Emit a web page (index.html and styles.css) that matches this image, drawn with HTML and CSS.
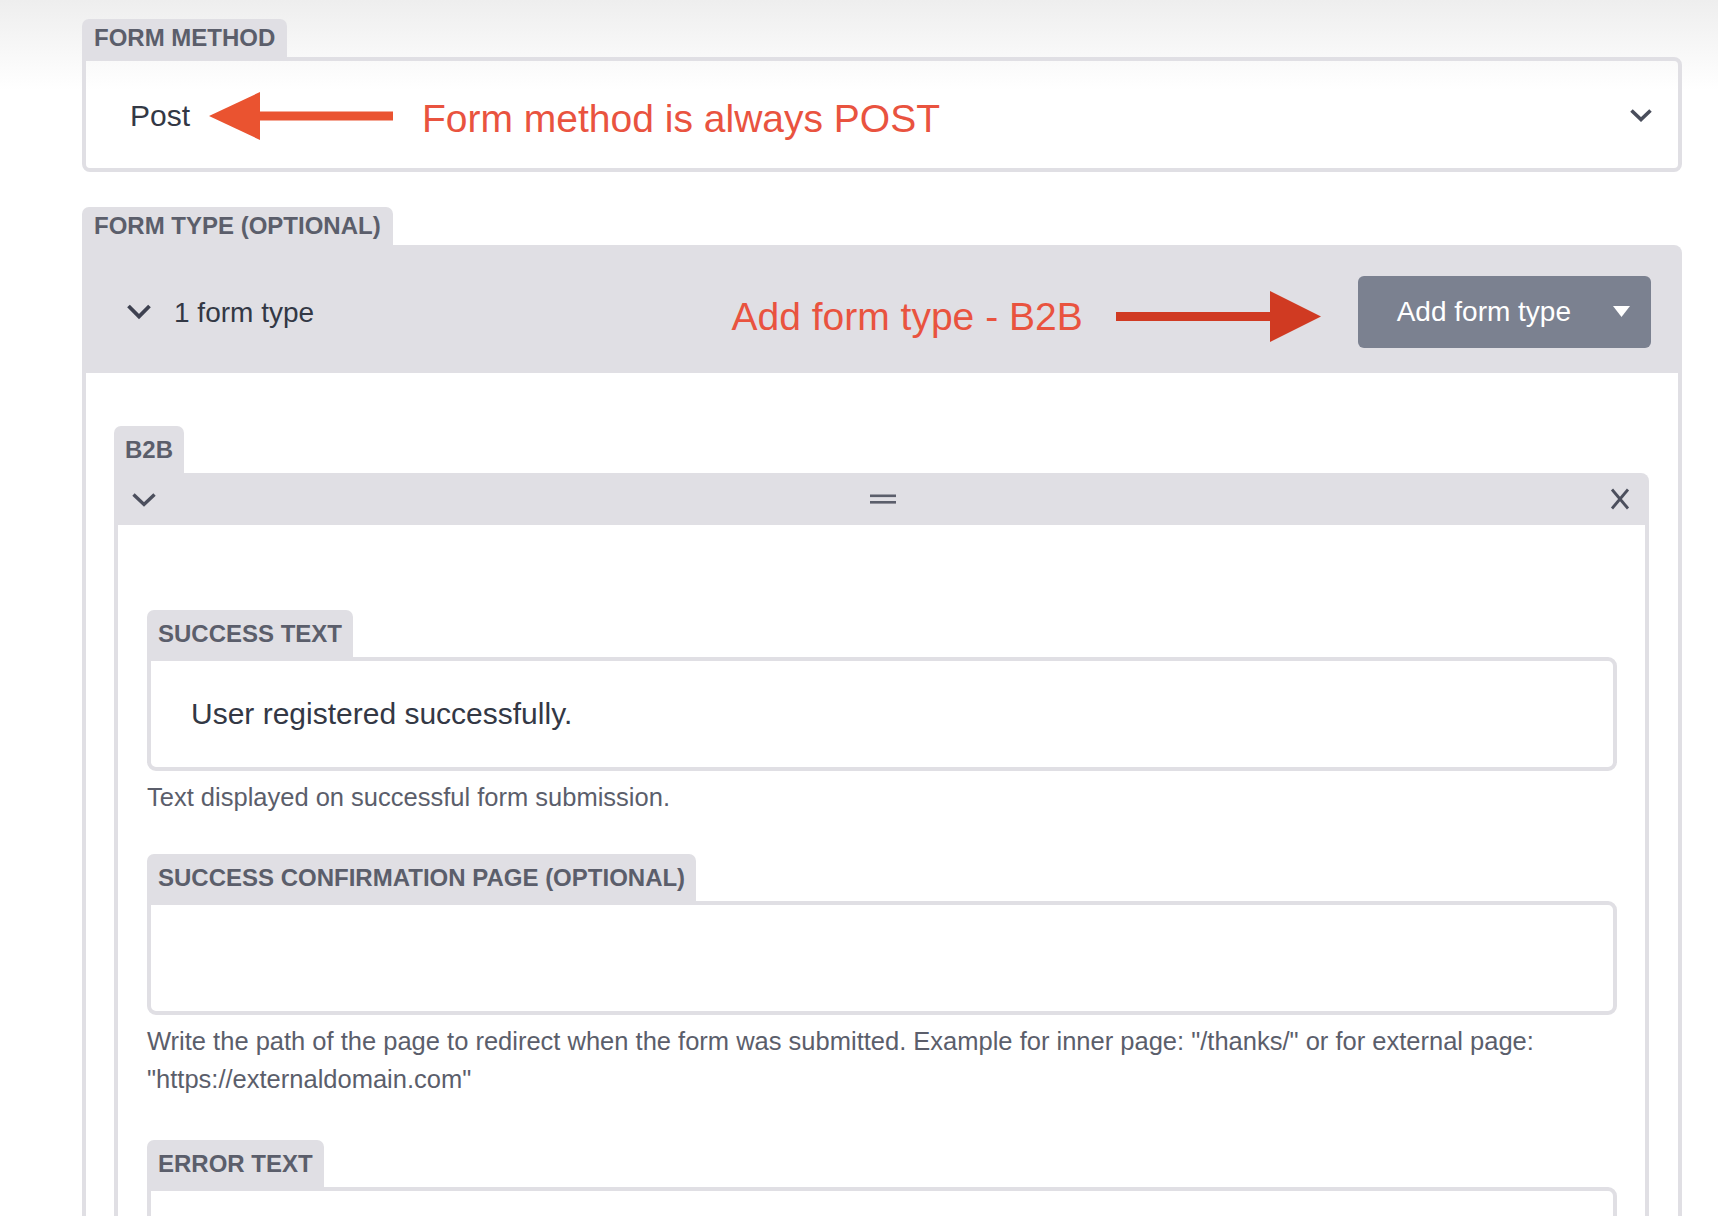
FILE: index.html
```html
<!DOCTYPE html>
<html lang="en">
<head>
	<meta charset="UTF-8">
	<title>Form settings</title>

	<link rel="stylesheet" href="styles.css">
</head>
<body>
<div class="page">

	<div class="field">
		<div class="tab">Form method</div>
		<div class="select">
			<span class="select-value">Post</span>
			<svg class="arrow-left" viewBox="0 0 184 48" width="184" height="48">
				<polygon points="0,24 51,0 51,48" fill="#ea5330"/>
				<rect x="50" y="19.5" width="134" height="9" fill="#ea5330"/>
			</svg>
			<span class="note">Form method is always POST</span>
			<svg class="select-chevron" viewBox="0 0 24 15" width="24" height="15">
				<polyline points="2.5,2.5 12,11.5 21.5,2.5" fill="none" stroke="#4a4e5c" stroke-width="3.6"/>
			</svg>
		</div>
	</div>

	<div class="field types">
		<div class="tab">Form type (optional)</div>
		<div class="panel-head">
			<svg class="head-chevron" viewBox="0 0 26 17" width="26" height="17">
				<polyline points="2.5,3 13,13.5 23.5,3" fill="none" stroke="#3e4150" stroke-width="3.8"/>
			</svg>
			<span class="count">1 form type</span>
			<span class="note note-right">Add form type - B2B</span>
			<svg class="arrow-right" viewBox="0 0 205 51" width="205" height="51">
				<rect x="0" y="21" width="156" height="9" fill="#d03a22"/>
				<polygon points="154,0 205,25.5 154,51" fill="#d03a22"/>
			</svg>
			<button class="add-btn" type="button">
				<span>Add form type</span>
				<svg viewBox="0 0 17 11" width="17" height="11">
					<polygon points="0,0 17,0 8.5,11" fill="#fff"/>
				</svg>
			</button>
		</div>
		<div class="panel-body">
			<div class="block">
				<div class="tab tab-tall">B2B</div>
				<div class="block-head">
					<svg viewBox="0 0 26 15" width="26" height="15">
						<polyline points="2.5,2.5 13,12.5 23.5,2.5" fill="none" stroke="#4c4f5d" stroke-width="3.4"/>
					</svg>
					<svg viewBox="0 0 26 10" width="26" height="10">
						<rect x="0" y="0.5" width="26" height="2.6" fill="#5b5e6b"/>
						<rect x="0" y="7" width="26" height="2.6" fill="#5b5e6b"/>
					</svg>
					<svg viewBox="0 0 22 22" width="22" height="22">
						<line x1="3" y1="1.5" x2="19" y2="20.5" stroke="#4c4f5d" stroke-width="2.8"/>
						<line x1="19" y1="1.5" x2="3" y2="20.5" stroke="#4c4f5d" stroke-width="2.8"/>
					</svg>
				</div>
				<div class="block-body">
					<div class="sub-field">
						<div class="tab tab-tall">Success text</div>
						<div class="input">User registered successfully.</div>
						<p class="help">Text displayed on successful form submission.</p>
					</div>
					<div class="sub-field">
						<div class="tab tab-tall">Success confirmation page (optional)</div>
						<div class="input"></div>
						<p class="help">Write the path of the page to redirect when the form was submitted. Example for inner page: "/thanks/" or for external page: "https://externaldomain.com"</p>
					</div>
					<div class="sub-field sub-field-wide">
						<div class="tab tab-tall">Error text</div>
						<div class="input"></div>
					</div>
				</div>
			</div>
		</div>
	</div>

</div>
</body>
</html>
```

FILE: styles.css
```css
*{
    box-sizing: border-box;
}

body{
    margin: 0;
    font-family: "Liberation Sans", Arial, sans-serif;
    color: #333845;
    background: #fff linear-gradient(#eeeeee, #ffffff 90px) no-repeat;
}

.page{
    padding: 19px 36px 0 82px;
}

/* label tabs */
.tab{
    display: flex;
    align-items: center;
    width: fit-content;
    height: 38px;
    padding: 0 12px;
    background: #e0dfe4;
    color: #5b5e6b;
    font-size: 24px;
    font-weight: bold;
    text-transform: uppercase;
    border-radius: 7px 7px 0 0;
}

.tab-tall{
    height: 47px;
    padding: 0 11px;
}

/* form method */
.select{
    display: flex;
    align-items: center;
    height: 115px;
    padding: 2px 25px 0 44px;
    border: 4px solid #e0dfe4;
    border-radius: 0 8px 8px 8px;
}

.select-value{
    font-size: 30px;
}

.arrow-left{
    margin-left: 19px;
}

.note{
    margin: 6px 0 0 29px;
    font-size: 39px;
    color: #e9533f;
}

.select-chevron{
    margin-left: auto;
}

/* form types */
.types{
    margin-top: 35px;
}

.panel-head{
    display: flex;
    align-items: center;
    height: 128px;
    padding: 5px 31px 0 44px;
    background: #e0dfe4;
    border-radius: 0 8px 0 0;
}

.count{
    margin-left: 22px;
    font-size: 28px;
    margin-top: 3px;
}

.note-right{
    margin: 10px 0 0 auto;
}

.arrow-right{
    margin: 10px 37px 0 33px;
}

.add-btn{
    display: flex;
    align-items: center;
    gap: 42px;
    height: 72px;
    padding: 0 21px 0 39px;
    border: 0;
    border-radius: 6px;
    background: #7b8190;
    color: #fff;
    font-family: inherit;
    font-size: 28px;
}

.panel-body{
    padding: 53px 29px 0 28px;
    border: solid #e0dfe4;
    border-width: 0 4px;
}

.block-head{
    display: flex;
    align-items: center;
    justify-content: space-between;
    height: 52px;
    padding: 0 18px 0 17px;
    background: #e0dfe4;
    border-radius: 0 8px 0 0;
}

.block-body{
    padding: 85px 28px 0 29px;
    border: solid #e0dfe4;
    border-width: 0 4px;
}

.sub-field + .sub-field{
    margin-top: 38px;
}

.sub-field + .sub-field-wide{
    margin-top: 42px;
}

.input{
    display: flex;
    align-items: center;
    height: 114px;
    padding: 0 40px;
    border: 4px solid #e0dfe4;
    border-radius: 0 9px 9px 9px;
    font-size: 30px;
}

.help{
    margin: 7px 0 0;
    font-size: 25.5px;
    line-height: 38px;
    color: #5b5e6b;
}
```
